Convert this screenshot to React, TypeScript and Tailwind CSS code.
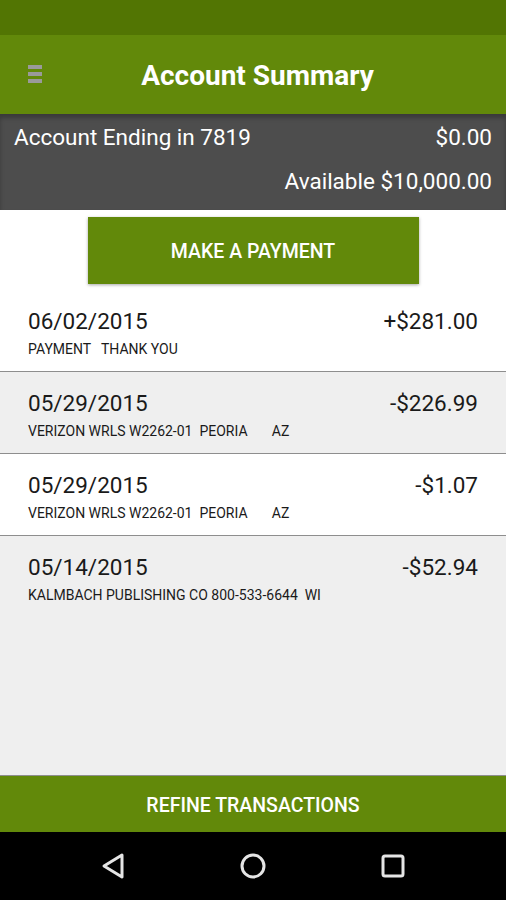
const transactions = [
  { date: "06/02/2015", desc: "PAYMENT   THANK YOU", amount: "+$281.00" },
  { date: "05/29/2015", desc: "VERIZON WRLS W2262-01  PEORIA       AZ", amount: "-$226.99" },
  { date: "05/29/2015", desc: "VERIZON WRLS W2262-01  PEORIA       AZ", amount: "-$1.07" },
  { date: "05/14/2015", desc: "KALMBACH PUBLISHING CO 800-533-6644  WI", amount: "-$52.94" },
];

export default function App() {
  return (
    <div
      className="w-[506px] h-[900px] flex flex-col bg-white overflow-hidden"
      style={{ fontFamily: "Roboto, 'Noto Sans', sans-serif" }}
    >
      {/* Status bar */}
      <div className="h-[35px] bg-[#527503]" />

      {/* Header */}
      <div className="h-[79px] bg-[#62890a] flex items-center relative">
        <div className="absolute left-[28px] top-[30px] flex flex-col gap-[3px]">
          <span className="block w-[14px] h-[4px] bg-[#9a9a9a]" />
          <span className="block w-[14px] h-[4px] bg-[#9a9a9a]" />
          <span className="block w-[14px] h-[4px] bg-[#9a9a9a]" />
        </div>
        <h1 className="w-full text-center text-white font-bold text-[28px] pl-[9px] pt-[2px]">Account Summary</h1>
      </div>

      {/* Account info */}
      <div className="h-[96px] bg-[#4d4d4d] text-white px-[14px] pt-[9px] shadow-[inset_0_4px_4px_rgba(0,0,0,0.25)]">
        <div className="flex justify-between text-[22.5px] leading-[28px]">
          <span>Account Ending in 7819</span>
          <span>$0.00</span>
        </div>
        <div className="text-right text-[22.5px] leading-[28px] mt-[16px]">Available $10,000.00</div>
      </div>

      {/* Payment button */}
      <div className="h-[80px] flex justify-center pt-[7px]">
        <button className="w-[331px] h-[67px] bg-[#62890a] text-white text-[19.5px] font-medium pt-[3px] shadow-[0_1px_3px_rgba(0,0,0,0.35)]">
          MAKE A PAYMENT
        </button>
      </div>

      {/* Transactions */}
      <div className="flex-1 flex flex-col">
        {transactions.map((t, i) => (
          <div
            key={i}
            className={
              (i % 2 === 0 ? "bg-white" : "bg-[#efefef]") +
              (i === transactions.length - 1 ? " flex-1" : " h-[82px] border-b border-[#8e8e8e]") +
              " px-[28px] pt-[17px]"
            }
          >
            <div className="flex justify-between text-[22.5px] leading-[28px] text-[#1a1a1a]">
              <span>{t.date}</span>
              <span>{t.amount}</span>
            </div>
            <div className="text-[14px] leading-[18px] mt-[5px] text-[#1a1a1a] whitespace-pre">{t.desc}</div>
          </div>
        ))}
      </div>

      {/* Refine */}
      <div className="h-[57px] bg-[#62890a] border-t border-[#8e8e8e] flex items-center justify-center pt-[3px] text-white text-[19.5px] font-medium">
        REFINE TRANSACTIONS
      </div>

      {/* Nav bar */}
      <div className="h-[68px] bg-black flex items-center justify-center gap-[112px]">
        <svg width="28" height="28" viewBox="0 0 28 28">
          <path d="M23 3 L5 14 L23 25 Z" fill="none" stroke="#e5e5e5" strokeWidth="3" strokeLinejoin="round" />
        </svg>
        <svg width="28" height="28" viewBox="0 0 28 28">
          <circle cx="14" cy="14" r="11" fill="none" stroke="#e5e5e5" strokeWidth="3" />
        </svg>
        <svg width="28" height="28" viewBox="0 0 28 28">
          <rect x="4" y="4" width="20" height="20" rx="2" fill="none" stroke="#e5e5e5" strokeWidth="3" />
        </svg>
      </div>
    </div>
  );
}
